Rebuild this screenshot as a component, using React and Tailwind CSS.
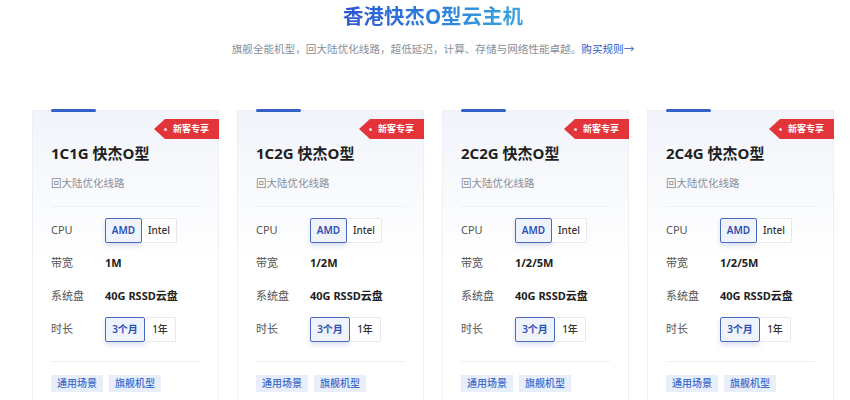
const plans = [
  { name: "1C1G 快杰O型", bw: "1M" },
  { name: "1C2G 快杰O型", bw: "1/2M" },
  { name: "2C2G 快杰O型", bw: "1/2/5M" },
  { name: "2C4G 快杰O型", bw: "1/2/5M" },
];

function Toggle({ options }) {
  return (
    <div className="flex">
      {options.map((o, i) => (
        <div
          key={o.label}
          className={
            i === 0
              ? "h-[25px] flex items-center justify-center border border-[#4a68c0] bg-[#eef3fc] text-[#2f4fae] text-[10px] font-semibold rounded-[2px] shadow-[0_3px_5px_rgba(60,90,170,0.18)]"
              : "h-[25px] flex items-center justify-center border border-l-0 border-[#e6e8ee] bg-white text-[#333] text-[10px] font-medium rounded-r-[2px]"
          }
          style={{ width: o.w }}
        >
          {o.label}
        </div>
      ))}
    </div>
  );
}

function Row({ label, children }) {
  return (
    <div className="h-[33px] flex items-center">
      <div className="w-[54px] text-[11px] text-[#555]">{label}</div>
      {children}
    </div>
  );
}

function Card({ plan }) {
  return (
    <div className="relative w-[187px] h-[300px] shrink-0 border border-[#eceff4] bg-gradient-to-b from-[#f1f4fa] via-white to-white px-[18px] pt-[32px]">
      <div className="absolute top-[-2px] left-[18px] w-[45px] h-[3px] bg-[#3560c8] rounded-full" />
      <div className="absolute top-[8px] right-[-1px] w-[65px] h-[20px] bg-[#e3343a] flex items-center pl-[10px] text-white text-[9px] font-bold [clip-path:polygon(11px_0,100%_0,100%_100%,11px_100%,0_50%)]">
        <span className="w-[3px] h-[3px] rounded-full bg-white/80 mr-[6px]" />
        新客专享
      </div>
      <div className="text-[15px] leading-5 font-bold text-[#1f1f1f]">{plan.name}</div>
      <div className="mt-[12px] text-[10.5px] leading-4 text-[#8a8f99]">回大陆优化线路</div>
      <div className="mt-[15px] h-px bg-[#eef0f4]" />
      <div className="mt-[7px]">
        <Row label="CPU">
          <Toggle options={[{ label: "AMD", w: 37 }, { label: "Intel", w: 35 }]} />
        </Row>
        <Row label="带宽">
          <div className="text-[11px] font-bold text-[#222]">{plan.bw}</div>
        </Row>
        <Row label="系统盘">
          <div className="text-[11px] font-bold text-[#222]">40G RSSD云盘</div>
        </Row>
        <Row label="时长">
          <Toggle options={[{ label: "3个月", w: 40 }, { label: "1年", w: 31 }]} />
        </Row>
      </div>
      <div className="mt-[15px] h-px bg-[#eef0f4]" />
      <div className="mt-[13px] flex gap-[6px]">
        <span className="h-[17px] px-[6px] flex items-center bg-[#e8effa] text-[#3d6ccc] text-[10px] font-medium">通用场景</span>
        <span className="h-[17px] px-[6px] flex items-center bg-[#e8effa] text-[#3d6ccc] text-[10px] font-medium">旗舰机型</span>
      </div>
    </div>
  );
}

export default function App() {
  return (
    <div
      className="w-[850px] h-[400px] overflow-hidden bg-white"
      style={{ fontFamily: '"Noto Sans", "Noto Sans CJK SC", sans-serif' }}
    >
      <div className="pt-[2px] pl-[16px] flex flex-col items-center">
        <h1 className="text-[20.5px] leading-7 font-bold bg-gradient-to-r from-[#2d55d6] to-[#3aa6de] bg-clip-text text-transparent">
          香港快杰O型云主机
        </h1>
        <p className="mt-[11px] text-[10.6px] leading-4 text-[#8a8f99]">
          旗舰全能机型，回大陆优化线路，超低延迟，计算、存储与网络性能卓越。
          <span className="text-[#3158c4]">购买规则→</span>
        </p>
      </div>
      <div className="mt-[53px] pl-[32px] flex gap-[18px]">
        {plans.map((p) => (
          <Card key={p.name} plan={p} />
        ))}
      </div>
    </div>
  );
}
